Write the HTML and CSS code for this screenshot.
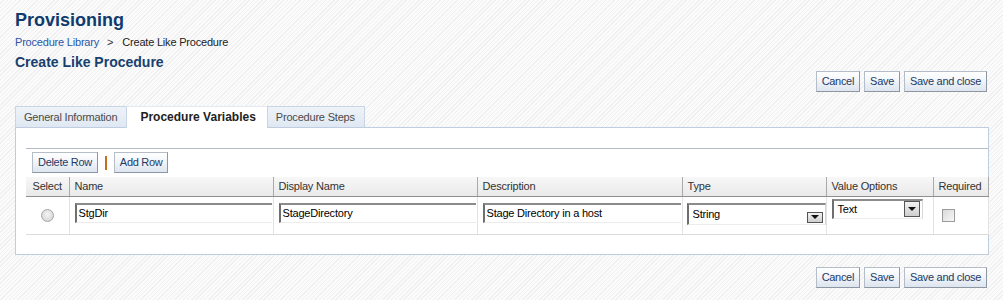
FILE: index.html
```html
<!DOCTYPE html>
<html lang="en">

<head>
    <meta charset="UTF-8">
    <meta name="viewport" content="width=device-width, initial-scale=1.0">
    <title>Create Like Procedure</title>
    <link rel="stylesheet" href="styles.css">
</head>

<body>
    <div class="page">
        <h1 class="app-title">Provisioning</h1>
        <div class="crumbs">
            <a href="#" class="crumb-link">Procedure Library</a><span class="crumb-sep">&gt;</span><span class="crumb-current">Create Like Procedure</span>
        </div>
        <h2 class="page-title">Create Like Procedure</h2>

        <div class="actions">
            <button class="btn">Cancel</button>
            <button class="btn">Save</button>
            <button class="btn">Save and close</button>
        </div>

        <div class="tabs">
            <div class="tab">General Information</div>
            <div class="tab tab-active">Procedure Variables</div>
            <div class="tab">Procedure Steps</div>
        </div>

        <div class="panel">
            <div class="panel-rule"></div>
            <div class="toolbar">
                <button class="btn">Delete Row</button>
                <span class="toolbar-sep"></span>
                <button class="btn">Add Row</button>
            </div>

            <table class="grid">
                <colgroup>
                    <col class="c-select">
                    <col class="c-name">
                    <col class="c-display">
                    <col class="c-desc">
                    <col class="c-type">
                    <col class="c-value">
                    <col class="c-req">
                </colgroup>
                <thead>
                    <tr>
                        <th class="th-center">Select</th>
                        <th>Name</th>
                        <th>Display Name</th>
                        <th>Description</th>
                        <th>Type</th>
                        <th>Value Options</th>
                        <th>Required</th>
                    </tr>
                </thead>
                <tbody>
                    <tr>
                        <td class="td-center"><span class="radio"></span></td>
                        <td class="td-field"><div class="field">StgDir</div></td>
                        <td class="td-field"><div class="field">StageDirectory</div></td>
                        <td class="td-field"><div class="field">Stage Directory in a host</div></td>
                        <td class="td-field td-type">
                            <div class="select select-type">
                                <span class="select-text">String</span>
                                <span class="select-btn"><span class="caret"></span></span>
                            </div>
                        </td>
                        <td class="td-field td-value">
                            <div class="select select-value">
                                <span class="select-text">Text</span>
                                <span class="select-btn"><span class="caret"></span></span>
                            </div>
                        </td>
                        <td class="td-check"><span class="checkbox"></span></td>
                    </tr>
                </tbody>
            </table>
        </div>

        <div class="actions actions-bottom">
            <button class="btn">Cancel</button>
            <button class="btn">Save</button>
            <button class="btn">Save and close</button>
        </div>
    </div>
</body>

</html>
```

FILE: styles.css
```css
* {
    margin: 0;
    padding: 0;
    box-sizing: border-box;
}

body {
    font-family: "Liberation Sans", Arial, sans-serif;
    font-size: 11px;
    letter-spacing: -0.2px;
    color: #000;
    background: repeating-linear-gradient(135deg, #fbfbfb 0 2px, #f0f0f0 2px 3px);
    height: 300px;
    overflow: hidden;
}

.page {
    padding: 9px 14px 0 15px;
}

/* header area */
.app-title {
    font-size: 18px;
    line-height: 22px;
    font-weight: bold;
    letter-spacing: 0;
    color: #0f3b6e;
}

.crumbs {
    margin-top: 4px;
    line-height: 14px;
}

.crumb-link {
    color: #2a55a8;
    text-decoration: none;
}

.crumb-sep {
    margin: 0 9px 0 8px;
    color: #333;
}

.crumb-current {
    color: #222;
}

.page-title {
    margin-top: 4px;
    font-size: 14px;
    line-height: 18px;
    font-weight: bold;
    letter-spacing: 0;
    color: #17406f;
}

/* buttons */
.actions {
    display: flex;
    justify-content: flex-end;
    gap: 4px;
    padding-right: 2px;
}

.actions-bottom {
    margin-top: 12px;
}

.btn {
    font-family: "Liberation Sans", Arial, sans-serif;
    font-size: 11px;
    letter-spacing: -0.3px;
    height: 21px;
    line-height: 19px;
    padding: 0 5px;
    color: #1d3a67;
    background: linear-gradient(#ffffff, #f2f5f9 45%, #dde5ef);
    border: 1px solid #b4bdc8;
    border-right-color: #8d97a4;
    border-bottom-color: #8d97a4;
    cursor: pointer;
}

/* tabs */
.tabs {
    display: flex;
    margin-top: 14px;
    height: 21px;
}

.tab {
    height: 21px;
    line-height: 20px;
    padding: 0 9px 0 8px;
    color: #4b4b4b;
    background: linear-gradient(#eef3f9, #dfe8f2);
    border-top: 1px solid #c9d5e4;
    border-left: 1px solid #c9d5e4;
}

.tab:last-child {
    border-right: 1px solid #c9d5e4;
    padding-right: 9px;
}

.tab-active {
    position: relative;
    height: 22px;
    padding: 0 11px 0 13px;
    font-size: 12px;
    font-weight: bold;
    letter-spacing: 0;
    color: #222;
    background: #fff;
    border-top-color: #e4eaf2;
}

/* panel */
.panel {
    background: #fff;
    border: 1px solid #bfcde0;
    padding: 20px 0 19px 10px;
}

.panel-rule {
    border-top: 1px solid #b3bdca;
}

.toolbar {
    display: flex;
    align-items: center;
    gap: 7px;
    margin-top: 3px;
    padding-left: 6px;
}

.toolbar-sep {
    width: 2px;
    height: 14px;
    background: #c2701f;
}

/* table */
.grid {
    margin-top: 4px;
    width: 962px;
    border-collapse: collapse;
    table-layout: fixed;
}

.c-select { width: 43px; }
.c-name { width: 204px; }
.c-display { width: 204px; }
.c-desc { width: 205px; }
.c-type { width: 144px; }
.c-value { width: 107px; }
.c-req { width: 55px; }

.grid th {
    height: 19px;
    line-height: 18px;
    padding: 0 0 0 5px;
    text-align: left;
    font-weight: normal;
    color: #333;
    background: linear-gradient(#f7f7f7, #e9e9e9);
    border-right: 1px solid #a9a9a9;
    border-bottom: 1px solid #8f8f8f;
    white-space: nowrap;
}

.grid .th-center {
    text-align: center;
    padding: 0;
}

.grid td {
    height: 38px;
    border-right: 1px solid #e3e3e3;
    border-bottom: 1px solid #dcdcdc;
    vertical-align: top;
}

.grid .td-center {
    text-align: center;
    vertical-align: middle;
    padding-top: 2px;
}

.grid .td-field {
    padding: 6px 1px 0 5px;
}

.grid .td-type {
    padding-left: 4px;
    padding-right: 0;
}

.grid .td-value {
    padding-top: 2px;
}

.grid .td-check {
    vertical-align: middle;
    padding: 0 0 0 8px;
}

.field {
    height: 20px;
    line-height: 17px;
    padding-left: 2px;
    border-top: 2px solid #8b8b8b;
    border-left: 2px solid #6f6f6f;
    border-bottom: 1px solid #ececec;
    white-space: nowrap;
    overflow: hidden;
}

.select {
    display: flex;
    align-items: flex-end;
    justify-content: space-between;
    border-top: 2px solid #8b8b8b;
    border-left: 2px solid #6f6f6f;
    border-bottom: 1px solid #ececec;
    border-right: 1px solid #d6d6d6;
    padding: 0 2px 1px 4px;
}

.select-type {
    height: 22px;
}

.select-value {
    width: 91px;
    height: 20px;
    align-items: stretch;
    padding-bottom: 1px;
}

.select-text {
    align-self: center;
    line-height: 14px;
}

.select-value .select-text {
    align-self: flex-start;
    line-height: 16px;
}

.select-btn {
    display: flex;
    align-items: center;
    justify-content: center;
    width: 16px;
    height: 11px;
    background: linear-gradient(#f2f2f2, #cfcfcf);
    border: 1px solid #555;
}

.select-value .select-btn {
    height: auto;
}

.caret {
    width: 0;
    height: 0;
    border-left: 4px solid transparent;
    border-right: 4px solid transparent;
    border-top: 4px solid #111;
}

.radio {
    display: inline-block;
    width: 13px;
    height: 13px;
    border-radius: 50%;
    border: 1px solid #a7a7a7;
    background: radial-gradient(circle at 50% 40%, #f4f4f4, #cfcfcf);
}

.checkbox {
    display: block;
    width: 13px;
    height: 13px;
    border: 1px solid #9b9b9b;
    background: linear-gradient(135deg, #d9d9d9, #f7f7f7);
}
```
